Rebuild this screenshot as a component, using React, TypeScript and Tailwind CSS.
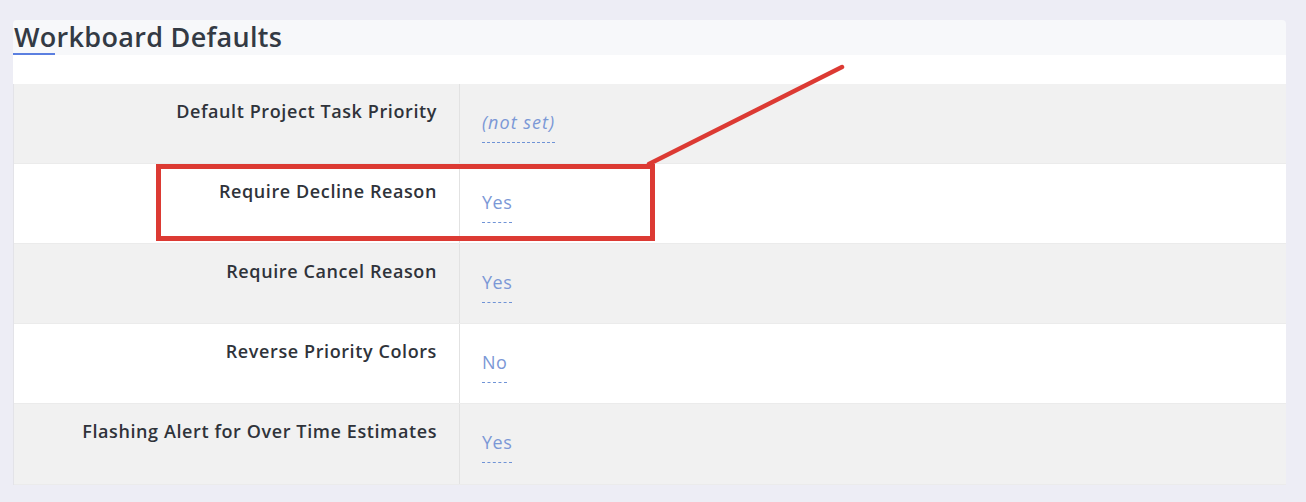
import React from "react";

// Workboard default settings
const rows = [
    { label: "Default Project Task Priority", value: "(not set)", empty: true },
    { label: "Require Decline Reason", value: "Yes" },
    { label: "Require Cancel Reason", value: "Yes" },
    { label: "Reverse Priority Colors", value: "No" },
    { label: "Flashing Alert for Over Time Estimates", value: "Yes" }
];

const App = () => {
    return (
        <div className="min-h-[502px] w-[1306px] bg-[#ededf5] pt-5 pl-[13px] pr-5 font-['Open_Sans',sans-serif]">
            <div className="relative w-[1273px]">
                <div className="h-[35px] bg-[#f7f8fa] rounded-t-sm">
                    <h2 className="inline-block relative text-[27px] leading-[34px] font-semibold text-[#333a44] tracking-[0.3px] pl-[1px]">
                        Workboard Defaults
                        <span className="absolute left-0 bottom-[-1px] w-[42px] h-[2px] bg-[#5b7fe0]" />
                    </h2>
                </div>
                <div className="h-[29px] bg-white" />
                <div className="border-l border-[#e3e3e8]">
                    {rows.map((row, i) => (
                        <div
                            key={i}
                            className={`flex border-b border-[#ebebeb] ${i === rows.length - 1 ? "h-[81px]" : "h-20"} ${i % 2 === 0 ? "bg-[#f1f1f1]" : "bg-white"}`}
                        >
                            <div className="w-[446px] shrink-0 border-r border-[#e2e2e2] pr-[22px] pt-[14px] text-right text-[18px] tracking-[0.6px] font-semibold text-[#2f333a]">
                                {row.label}
                            </div>
                            <div className="pl-[22px] pt-[25px]">
                                <span
                                    className={`inline-block pb-[6px] border-b border-dashed border-[#6f93d6] text-[18px] text-[#7b98d6] ${row.empty ? "italic tracking-[1px]" : "tracking-[0.5px]"}`}
                                >
                                    {row.value}
                                </span>
                            </div>
                        </div>
                    ))}
                </div>

                {/* red annotation */}
                <svg
                    className="absolute left-0 top-0 pointer-events-none"
                    width="1273"
                    height="260"
                    viewBox="0 0 1273 260"
                >
                    <rect x="145.5" y="146.5" width="494" height="72" fill="none" stroke="#dc3a33" strokeWidth="5" />
                    <path d="M636 144 L829 47" stroke="#dc3a33" strokeWidth="4.5" strokeLinecap="round" fill="none" />
                </svg>
            </div>
        </div>
    );
};

export default App;
